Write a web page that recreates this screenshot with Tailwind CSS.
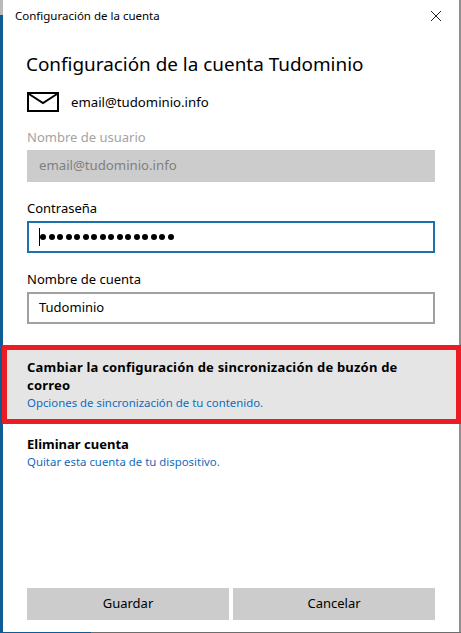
<!DOCTYPE html>
<html lang="es">
<head>
<meta charset="utf-8">
<script src="https://cdn.jsdelivr.net/npm/@tailwindcss/browser@4"></script>
</head>
<body class="m-0 overflow-hidden">
<div class="relative w-[461px] h-[633px] overflow-hidden bg-[#0f5c94] font-['Noto_Sans','Open_Sans',sans-serif] text-black">
  <div class="absolute left-0 top-0 w-[3px] h-[15px] bg-[#b9b9b9]"></div>
  <div class="absolute right-0 top-0 w-[2px] h-[633px] bg-[#8f8f8f]"></div>
  <div class="absolute right-0 bottom-0 w-[370px] h-[1px] bg-[#6d6d6d]"></div>
  <div class="relative ml-[3px] mr-[2px] h-[632px] bg-white flex flex-col">
    <div class="h-[32px] pl-[12px] pr-[17px] flex items-center justify-between">
      <span class="text-[11.5px] leading-[16px]">Configuración de la cuenta</span>
      <svg class="w-[12px] h-[12px]" viewBox="0 0 12 12" fill="none" stroke="#222" stroke-width="1"><path d="M1 1l10 10M11 1L1 11"/></svg>
    </div>
    <div class="pl-[24px] pr-[24px] flex flex-col">
      <h1 class="mt-[17px] -ml-[1px] text-[18.9px] leading-[30px] font-normal">Configuración de la cuenta Tudominio</h1>
      <div class="mt-[13px] flex items-center h-[20px]">
        <svg class="w-[32px] h-[20px] shrink-0" viewBox="0 0 32 20" fill="none" stroke="#000"><rect x="1" y="1" width="30" height="18" stroke-width="2"/><path d="M2 2l14 9 14-9" stroke-width="2"/></svg>
        <span class="ml-[12px] text-[13.2px] leading-[20px]">email@tudominio.info</span>
      </div>
      <label class="mt-[15px] text-[13px] leading-[20px] text-[#a3a3a3]">Nombre de usuario</label>
      <div class="mt-[3px] h-[32px] px-[12px] flex items-center bg-[#cccccc] text-[13.2px] text-[#7f7f7f]">email@tudominio.info</div>
      <label class="mt-[16px] text-[13px] leading-[20px]">Contraseña</label>
      <div class="mt-[3px] h-[32px] px-[10px] flex items-center border-2 border-[#1a72ad] bg-white">
        <span class="w-[1px] h-[18px] bg-black"></span>
        <span class="flex gap-[2.5px]">
          <i class="block w-[6px] h-[6px] rounded-full bg-black"></i><i class="block w-[6px] h-[6px] rounded-full bg-black"></i><i class="block w-[6px] h-[6px] rounded-full bg-black"></i><i class="block w-[6px] h-[6px] rounded-full bg-black"></i><i class="block w-[6px] h-[6px] rounded-full bg-black"></i><i class="block w-[6px] h-[6px] rounded-full bg-black"></i><i class="block w-[6px] h-[6px] rounded-full bg-black"></i><i class="block w-[6px] h-[6px] rounded-full bg-black"></i><i class="block w-[6px] h-[6px] rounded-full bg-black"></i><i class="block w-[6px] h-[6px] rounded-full bg-black"></i><i class="block w-[6px] h-[6px] rounded-full bg-black"></i><i class="block w-[6px] h-[6px] rounded-full bg-black"></i><i class="block w-[6px] h-[6px] rounded-full bg-black"></i><i class="block w-[6px] h-[6px] rounded-full bg-black"></i><i class="block w-[6px] h-[6px] rounded-full bg-black"></i><i class="block w-[6px] h-[6px] rounded-full bg-black"></i>
        </span>
      </div>
      <label class="mt-[16px] text-[13px] leading-[20px]">Nombre de cuenta</label>
      <div class="mt-[3px] h-[32px] px-[10px] flex items-center border-2 border-[#a0a0a0] bg-white text-[13px]">Tudominio</div>
    </div>
    <div class="mt-[21px] ml-[-1px] mr-[-2px] h-[79px] border-[5px] border-[#ec1c24] bg-[#e5e5e5] pl-[20px] pr-[21px] pt-[8px]">
      <div class="text-[13px] leading-[18px] font-bold tracking-[0.2px]">Cambiar la configuración de sincronización de buzón de correo</div>
      <div class="text-[11.4px] leading-[17px] text-[#0f6cbd]">Opciones de sincronización de tu contenido.</div>
    </div>
    <div class="mt-[11px] pl-[24px]">
      <div class="text-[13px] leading-[18px] font-bold">Eliminar cuenta</div>
      <div class="text-[11.4px] leading-[17px] text-[#0f6cbd]">Quitar esta cuenta de tu dispositivo.</div>
    </div>
    <div class="mt-auto mb-[12px] px-[24px] flex gap-[4px]">
      <div class="flex-1 h-[32px] flex items-center justify-center bg-[#cccccc] text-[13px]">Guardar</div>
      <div class="flex-1 h-[32px] flex items-center justify-center bg-[#cccccc] text-[13px]">Cancelar</div>
    </div>
  </div>
</div>
</body>
</html>
